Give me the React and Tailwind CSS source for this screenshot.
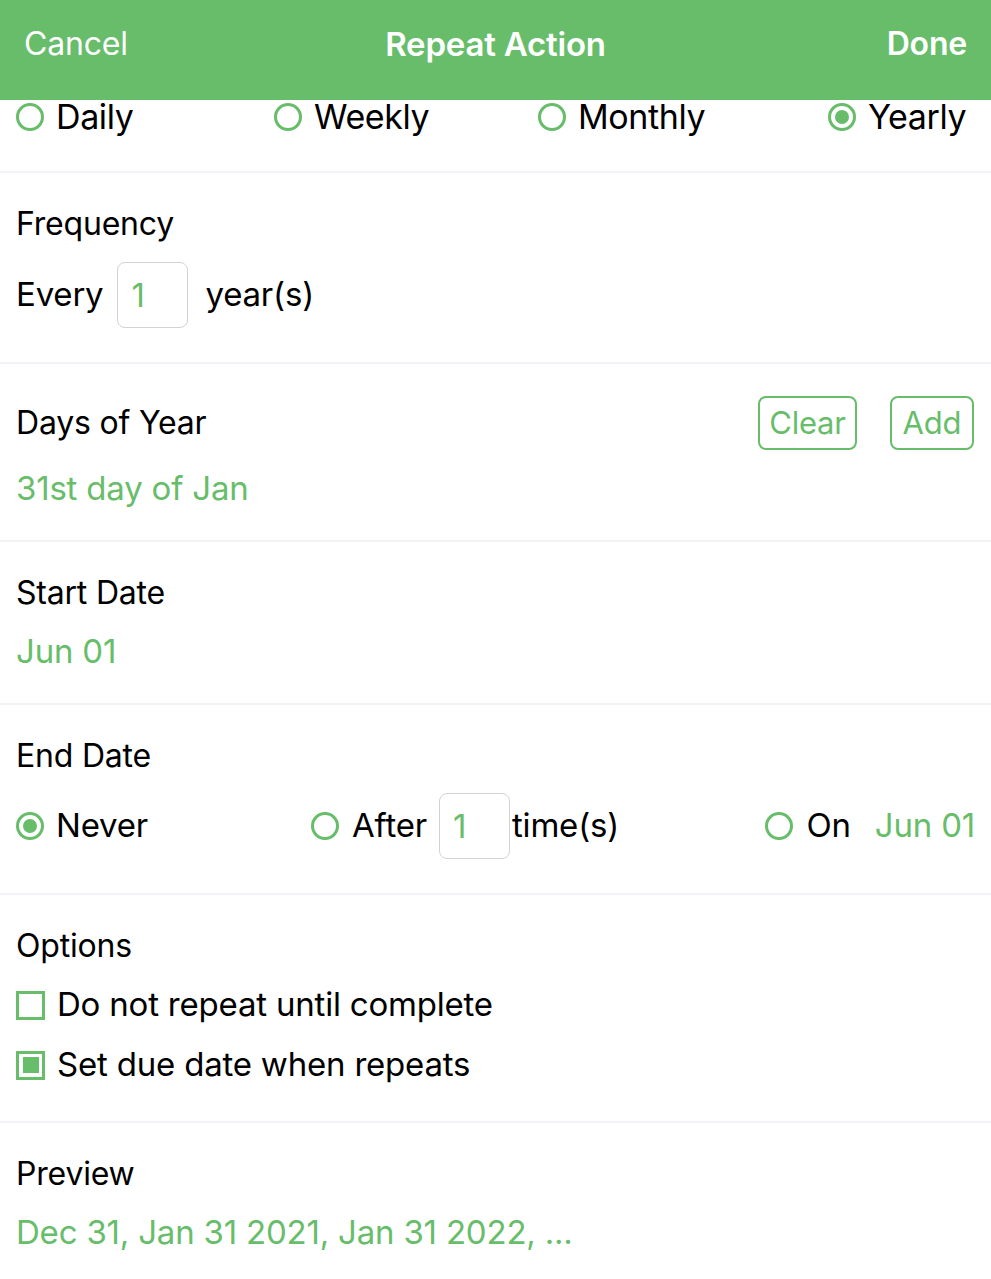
import { useState } from 'react';

const GREEN = 'text-[#67bd6a]';

function Radio({ checked }) {
  return (
    <span className="flex h-[28px] w-[28px] shrink-0 items-center justify-center rounded-full border-[3px] border-[#67bd6a]">
      {checked && <span className="h-[14px] w-[14px] rounded-full bg-[#67bd6a]" />}
    </span>
  );
}

function Checkbox({ checked }) {
  return (
    <span className="flex h-[29px] w-[29px] shrink-0 items-center justify-center border-[3px] border-[#67bd6a]">
      {checked && <span className="h-[16px] w-[16px] bg-[#67bd6a]" />}
    </span>
  );
}

function NumberBox({ value }) {
  return (
    <div className="flex h-[66px] w-[71px] items-center rounded-[8px] border-[1.5px] border-[#d2d2d2] pl-[13px] text-[33px] leading-none text-[#67bd6a]">
      {value}
    </div>
  );
}

function Section({ children, pb = 'pb-[34px]' }) {
  return <div className={`border-b-2 border-[#f2f2f7] px-4 pt-[36px] ${pb}`}>{children}</div>;
}

function Heading({ children }) {
  return <div className="text-[32px] leading-[30px] text-black">{children}</div>;
}

export default function App() {
  const [period] = useState('Yearly');
  const periods = ['Daily', 'Weekly', 'Monthly', 'Yearly'];

  return (
    <div className="min-h-[1279px] bg-white font-['Inter','Noto_Sans',sans-serif] tracking-[-0.2px] text-black">
      {/* nav bar */}
      <div className="grid h-[100px] grid-cols-[1fr_auto_1fr] items-start bg-[#67bd6a] px-[24px] pt-[24px] text-[32px] leading-[40px] text-white">
        <span>Cancel</span>
        <span className="text-[33px] font-semibold">Repeat Action</span>
        <span className="text-right font-semibold">Done</span>
      </div>

      {/* repeat type */}
      <div className="grid h-[73px] grid-cols-[258px_264px_290px_1fr] border-b-2 border-[#f2f2f7] pl-4">
        {periods.map((p) => (
          <div key={p} className="flex h-[34px] items-center gap-[12px]">
            <Radio checked={p === period} />
            <span className="text-[34px] leading-[34px] tracking-[-0.4px]">{p}</span>
          </div>
        ))}
      </div>

      <Section>
        <Heading>Frequency</Heading>
        <div className="mt-[23px] flex items-center text-[33px]">
          <span>Every</span>
          <div className="ml-[14px] mr-[17px]">
            <NumberBox value="1" />
          </div>
          <span>year(s)</span>
        </div>
      </Section>

      <div className="border-b-2 border-[#f2f2f7] px-4 pb-[32px] pt-[32px]">
        <div className="flex items-center justify-between">
          <span className="text-[32px] leading-[30px]">Days of Year</span>
          <div className="flex gap-[33px] pr-[1px]">
            <button className={`h-[54px] w-[99px] rounded-[8px] border-2 border-[#67bd6a] text-[31px] ${GREEN}`}>Clear</button>
            <button className={`h-[54px] w-[84px] rounded-[8px] border-2 border-[#67bd6a] text-[31px] ${GREEN}`}>Add</button>
          </div>
        </div>
        <div className={`mt-[18px] text-[33px] leading-[40px] ${GREEN}`}>31st day of Jan</div>
      </div>

      <Section pb="pb-[32px]">
        <Heading>Start Date</Heading>
        <div className={`mt-[23px] text-[33px] leading-[40px] ${GREEN}`}>Jun 01</div>
      </Section>

      <Section>
        <Heading>End Date</Heading>
        <div className="mt-[22px] flex items-center text-[33px]">
          <div className="flex w-[295px] items-center gap-[12px]">
            <Radio checked />
            <span>Never</span>
          </div>
          <div className="flex items-center">
            <Radio />
            <span className="ml-[13px] mr-[12px]">After</span>
            <NumberBox value="1" />
            <span className="ml-[2px]">time(s)</span>
          </div>
          <div className="ml-auto flex items-center">
            <Radio />
            <span className="ml-[13px]">On</span>
            <span className={`ml-[24px] ${GREEN}`}>Jun 01</span>
          </div>
        </div>
      </Section>

      <Section>
        <Heading>Options</Heading>
        <div className="mt-[22px] flex flex-col gap-[16px] text-[33px]">
          <div className="flex h-[44px] items-center gap-[12px]">
            <Checkbox />
            <span>Do not repeat until complete</span>
          </div>
          <div className="flex h-[44px] items-center gap-[12px]">
            <Checkbox checked />
            <span>Set due date when repeats</span>
          </div>
        </div>
      </Section>

      <div className="px-4 pt-[36px]">
        <Heading>Preview</Heading>
        <div className={`mt-[23px] text-[33px] leading-[40px] ${GREEN}`}>Dec 31, Jan 31 2021, Jan 31 2022, ...</div>
      </div>
    </div>
  );
}
